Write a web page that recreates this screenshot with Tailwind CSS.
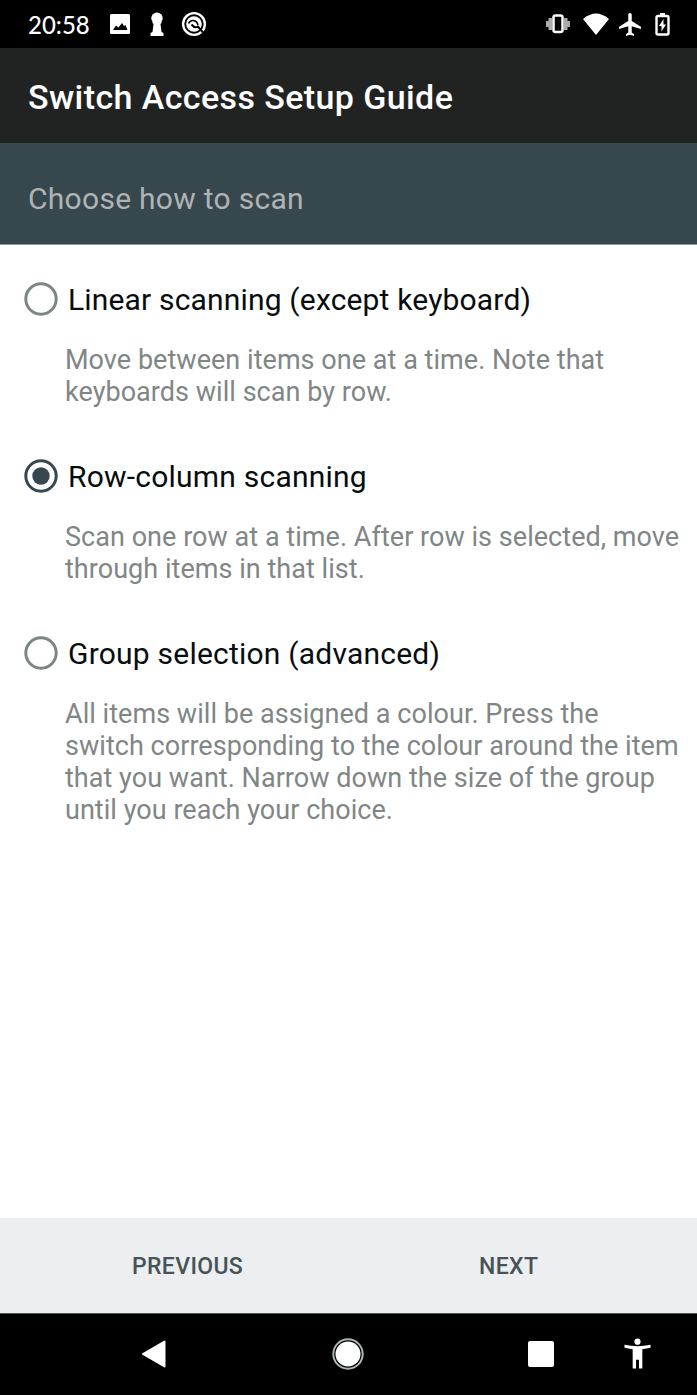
<!DOCTYPE html>
<html lang="en"><head><meta charset="utf-8"><title>Switch Access Setup Guide</title>
<script src="https://cdn.jsdelivr.net/npm/@tailwindcss/browser@4"></script></head>
<body class="bg-white">
<div class="w-[697px] h-[1395px] flex flex-col overflow-hidden bg-white font-['Roboto',sans-serif] whitespace-nowrap">
  <div class="h-12 shrink-0 bg-black text-white flex items-center pl-7 pr-[27px]">
    <span class="w-[63px] font-['Lato',sans-serif] font-medium text-[24px] leading-[50px] h-12">20:58</span>
    <svg class="ml-[19px]" width="20" height="20" viewBox="0 0 20 20"><rect width="20" height="20" rx="1.500" fill="#fff"/><path d="M3 16l3-4.500 2.500 2 3.500-4.500 2 3 1.500-1 2 5z" fill="#000"/></svg>
    <svg class="ml-[19px]" width="16" height="24" viewBox="0 0 16 24" fill="#fff"><circle cx="8" cy="6.200" r="5.700"/><path d="M3.500 9.500h9v1.500l-1 1 1 8 2 1v3h-13v-3l2-1 1-8-1-1z"/></svg>
    <svg class="ml-[16px]" width="26" height="26" viewBox="0 0 26 26" fill="none" stroke="#fff"><circle cx="13" cy="13" r="10.900" stroke-width="2.400"/><circle cx="13" cy="13" r="7.800" fill="#fff" stroke="none"/><path d="M7.500 12.500c2-4.500 8-4 9.500 1.500" stroke="#000" stroke-width="1.600"/><path d="M10.500 13.500c2.500 3 5 3 6.500 2L22 21.500" stroke="#000" stroke-width="2"/></svg>
    <svg class="ml-auto" width="26" height="20" viewBox="0 0 26 20"><path d="M1 7h2.500V4H7v12H3.500v-3H1zM25 7h-2.500V4H19v12h3.500v-3H25z" fill="#aaa"/><rect x="8.500" y="1.500" width="9" height="16.500" rx="2" fill="#000" stroke="#fff" stroke-width="2.500"/></svg>
    <svg class="ml-[12px]" width="26" height="22" viewBox="0 0 26 22"><path d="M0 6Q13-5 26 6L13 22z" fill="#fff"/></svg>
    <svg class="ml-[10px]" width="22" height="23" viewBox="2 2 19 20" fill="#fff"><path d="M21 16v-2l-8-5V3.500c0-.83-.67-1.500-1.500-1.500S10 2.670 10 3.500V9l-8 5v2l8-2.500V19l-2 1.500V22l3.500-1 3.500 1v-1.500L13 19v-5.500l8 2.500z"/></svg>
    <svg class="ml-[14px]" width="15" height="23" viewBox="0 0 15 23"><path d="M5 0h5v2.500H5z" fill="#fff"/><rect x="1.500" y="3" width="12" height="18.500" rx="1.500" fill="none" stroke="#fff" stroke-width="2.400"/><path d="M8.500 6L4 13h2.500v5.500L11 11.500H8.500z" fill="#fff"/></svg>
  </div>
  <header class="h-[95px] shrink-0 bg-[#212322] text-white pl-7 leading-[98px] text-[34px] tracking-[0.4px] font-medium">Switch Access Setup Guide</header>
  <div class="h-[102px] shrink-0 bg-[#37474e] text-[#b0b3b3] pl-7 leading-[112px] text-[30px] tracking-[0.28px] border-b border-[#8b9696]">Choose how to scan</div>
  <main class="flex-1 pt-[34px] text-[#808686] text-[27px] tracking-[0.04px]">
    <section class="h-[177px]">
      <div class="flex items-center h-10 pl-6 gap-[10px] text-[30px] tracking-[0.17px] text-[#070d0e]"><svg width="34" height="34" fill="none"><circle cx="17" cy="17" r="15.200" stroke="#7c8484" stroke-width="3"/></svg><span>Linear scanning (except keyboard)</span></div>
      <p class="pl-[65px] pt-[25px] leading-8">Move between items one at a time. Note that<br>keyboards will scan by row.</p>
    </section>
    <section class="h-[177px]">
      <div class="flex items-center h-10 pl-6 gap-[10px] text-[30px] tracking-[0.22px] text-[#070d0e]"><svg width="34" height="34" fill="none"><circle cx="17" cy="17" r="15.200" stroke="#37474e" stroke-width="3"/><circle cx="17" cy="17" r="8.700" fill="#37474e"/></svg><span>Row-column scanning</span></div>
      <p class="pl-[65px] pt-[25px] leading-8">Scan one row at a time. After row is selected, move<br>through items in that list.</p>
    </section>
    <section>
      <div class="flex items-center h-10 pl-6 gap-[10px] text-[30px] tracking-[0.22px] text-[#070d0e]"><svg width="34" height="34" fill="none"><circle cx="17" cy="17" r="15.200" stroke="#7c8484" stroke-width="3"/></svg><span>Group selection (advanced)</span></div>
      <p class="pl-[65px] pt-[25px] leading-8">All items will be assigned a colour. Press the<br>switch corresponding to the colour around the item<br>that you want. Narrow down the size of the group<br>until you reach your choice.</p>
    </section>
  </main>
  <div class="h-[95px] shrink-0 bg-[#edeef0] flex text-[#465357] text-[23px] tracking-[0.35px] font-medium leading-[98px]"><span class="ml-[132px] w-[347px]">PREVIOUS</span><span>NEXT</span></div>
  <div class="h-[82px] shrink-0 bg-black border-t border-[#465357] flex items-center pb-[2px]">
    <svg class="ml-[141px]" width="25" height="28" viewBox="0 0 25 28"><path d="M2 14L23.500 1.500v25z" fill="#fff" stroke="#fff" stroke-width="2" stroke-linejoin="round"/></svg>
    <svg class="ml-[166px]" width="32" height="32"><circle cx="16" cy="16" r="14.700" fill="none" stroke="#aeb5b5" stroke-width="2"/><circle cx="16" cy="16" r="12.500" fill="#fff"/></svg>
    <svg class="ml-[164px]" width="26" height="26"><rect width="26" height="26" rx="2" fill="#fff"/></svg>
    <svg class="ml-[70px]" width="27" height="31" viewBox="0 0 28 31" fill="#fff"><circle cx="14" cy="3.200" r="3.200"/><path d="M.5 6.500Q14 9.500 27.500 6.500V9.500L19 11v20h-3.500v-9h-3v9H9V11L.5 9.500z"/></svg>
  </div>
</div>
</body></html>
